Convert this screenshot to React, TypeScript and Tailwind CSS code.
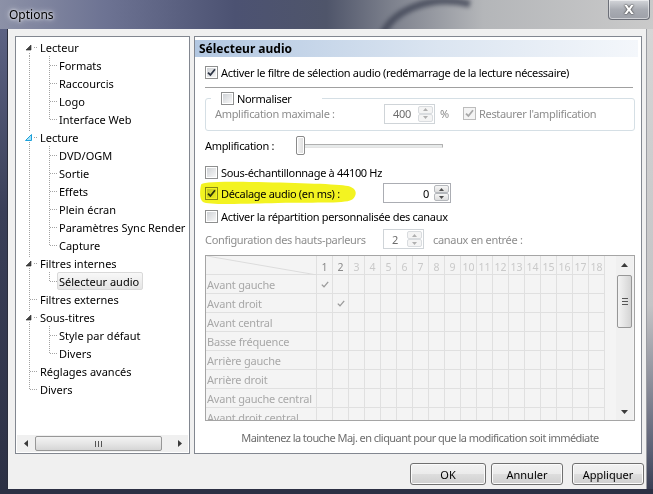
import React from 'react';

type TreeItem = { l: 0 | 1; t: string; arrow?: 'dark' | 'hover'; last?: boolean; first?: boolean; sel?: boolean };

const TREE: TreeItem[] = [
  { l: 0, t: 'Lecteur', arrow: 'dark', first: true },
  { l: 1, t: 'Formats' },
  { l: 1, t: 'Raccourcis' },
  { l: 1, t: 'Logo' },
  { l: 1, t: 'Interface Web', last: true },
  { l: 0, t: 'Lecture', arrow: 'hover' },
  { l: 1, t: 'DVD/OGM' },
  { l: 1, t: 'Sortie' },
  { l: 1, t: 'Effets' },
  { l: 1, t: 'Plein écran' },
  { l: 1, t: 'Paramètres Sync Render' },
  { l: 1, t: 'Capture', last: true },
  { l: 0, t: 'Filtres internes', arrow: 'dark' },
  { l: 1, t: 'Sélecteur audio', last: true, sel: true },
  { l: 0, t: 'Filtres externes' },
  { l: 0, t: 'Sous-titres', arrow: 'dark' },
  { l: 1, t: 'Style par défaut' },
  { l: 1, t: 'Divers', last: true },
  { l: 0, t: 'Réglages avancés' },
  { l: 0, t: 'Divers', last: true },
];

const CHANNELS = [
  'Avant gauche',
  'Avant droit',
  'Avant central',
  'Basse fréquence',
  'Arrière gauche',
  'Arrière droit',
  'Avant gauche central',
  'Avant droit central',
];

const Guide: React.FC<{ item: TreeItem }> = ({ item }) => {
  const w = item.l === 0 ? 21 : 40;
  const dots = { stroke: '#a3a3a3', strokeWidth: 1, strokeDasharray: '1 1', shapeRendering: 'crispEdges' as const };
  return (
    <svg width={w} height={18} className="shrink-0">
      {item.l === 0 ? (
        <>
          <line x1={12.5} y1={item.first ? 9 : 0} x2={12.5} y2={item.last ? 10 : 18} {...dots} />
          <line x1={item.arrow ? 17 : 13} y1={9.5} x2={21} y2={9.5} {...dots} />
          {item.arrow && <rect x={7} y={4} width={10} height={10} fill="#fff" />}
          {item.arrow === 'dark' && <polygon points="9,12 14,7 14,12" fill="#454545" stroke="#262626" strokeWidth={0.6} />}
          {item.arrow === 'hover' && <polygon points="8.5,12.5 14.5,6.5 14.5,12.5" fill="#a6e3f8" stroke="#1ca0da" strokeWidth={1} />}
        </>
      ) : (
        <>
          <line x1={12.5} y1={0} x2={12.5} y2={18} {...dots} />
          <line x1={32.5} y1={0} x2={32.5} y2={item.last ? 10 : 18} {...dots} />
          <line x1={33} y1={9.5} x2={40} y2={9.5} {...dots} />
        </>
      )}
    </svg>
  );
};

const Check: React.FC<{ checked?: boolean; disabled?: boolean }> = ({ checked, disabled }) => (
  <span
    className={`w-[13px] h-[13px] shrink-0 flex items-center justify-center border ${
      disabled ? 'border-[#bcbcbc] bg-[#f4f4f4]' : 'border-[#8e8f8f] bg-white'
    }`}
  >
    <span
      className={`w-[9px] h-[9px] flex items-center justify-center ${
        disabled ? 'bg-[#f4f4f4]' : 'bg-[linear-gradient(135deg,#cfd2d6,#f7f7f7)]'
      }`}
    >
      {checked && (
        <svg width="9" height="9" viewBox="0 0 9 9">
          <path d="M1 4.6 L3.4 7 L8 1.3" fill="none" stroke={disabled ? '#a8a8a8' : '#2e3646'} strokeWidth="1.8" />
        </svg>
      )}
    </span>
  </span>
);

const Spin: React.FC<{ value: string; w: string; pr: string; disabled?: boolean }> = ({ value, w, pr, disabled }) => (
  <div className={`${w} h-[20px] flex border ${disabled ? 'border-[#cfd4d8] bg-white' : 'border-[#abadb3] bg-white'}`}>
    <div className={`flex-1 flex items-center justify-end ${pr} ${disabled ? 'text-[#6d6d6d]' : 'text-black'}`}>{value}</div>
    <div className="w-[15px] flex flex-col my-[1px] mr-[1px]">
      {[0, 1].map((i) => (
        <div
          key={i}
          className={`flex-1 flex items-center justify-center border rounded-[2px] ${
            disabled ? 'border-[#d9dcdf] bg-[#f4f4f4]' : 'border-[#b5b8bc] bg-[linear-gradient(#f6f6f6,#dedede)]'
          }`}
        >
          <svg width="5" height="3" viewBox="0 0 5 3">
            <polygon points={i === 0 ? '0,3 2.5,0 5,3' : '0,0 2.5,3 5,0'} fill={disabled ? '#b0b0b0' : '#4d4d4d'} />
          </svg>
        </div>
      ))}
    </div>
  </div>
);

const Button: React.FC<{ label: string; className?: string }> = ({ label, className }) => (
  <button
    className={`h-[22px] border border-[#707070] rounded-[3px] shadow-[inset_0_0_0_1px_#fbfbfb] bg-[linear-gradient(#f2f2f2_0%,#ebebeb_48%,#dddddd_52%,#cfcfcf_100%)] text-black ${className ?? ''}`}
  >
    {label}
  </button>
);

const Arrow: React.FC<{ dir: 'up' | 'down' | 'left' | 'right' }> = ({ dir }) => {
  const pts = { up: '0,4 3.5,0 7,4', down: '0,0 3.5,4 7,0', left: '4,0 0,3.5 4,7', right: '0,0 4,3.5 0,7' }[dir];
  const vertical = dir === 'up' || dir === 'down';
  return (
    <svg width={vertical ? 7 : 4} height={vertical ? 4 : 7}>
      <polygon points={pts} fill="#3b3b3b" />
    </svg>
  );
};

export default function App() {
  return (
    <div className="w-[653px] h-[494px] flex flex-col overflow-hidden font-['Noto_Sans',sans-serif] text-[11px] leading-none text-black bg-[#3a3f55]">
      {/* title bar */}
      <div className="relative h-[29px] shrink-0 flex justify-between bg-[linear-gradient(90deg,#8c91a7_0%,#6d7393_16%,#4c5272_36%,#4f556a_50%,#7d818d_60%,#b4b6b9_74%,#cacaca_100%)] overflow-hidden">
        <svg className="absolute left-[360px] top-0" width="140" height="29">
          <path d="M20 40 C30 10 70 -6 110 4" fill="none" stroke="#3c4152" strokeWidth="7" opacity="0.75" style={{ filter: 'blur(2px)' }} />
        </svg>
        <span className="relative pl-[9px] pt-[9px] text-[12px] text-black [text-shadow:0_0_6px_#ffffff,0_0_3px_#ffffff]">Options</span>
        <div className="relative mr-[3px] w-[42px] h-[20px] rounded-b-[4px] border border-t-0 border-[#6c6f78] bg-[linear-gradient(#d4d6da,#a9acb3_50%,#9da0a8)] shadow-[inset_0_0_0_1px_rgba(255,255,255,0.5)] flex items-center justify-center">
          <span className="text-white font-bold text-[13px] font-['DejaVu_Sans',sans-serif] [text-shadow:0_0_2px_#333,0_0_1px_#333]">X</span>
        </div>
      </div>

      <div className="flex-1 flex min-h-0">
        <div className="w-[8px] shrink-0 bg-[linear-gradient(#5c6283,#3a3f58_40%,#2d3145)] border-r border-[#2a2d3c]" />

        {/* client area */}
        <div className="flex-1 bg-[#f0f0f0] flex flex-col pt-[7px] pl-[7px] pr-[2px]">
          <div className="h-[418px] flex gap-[4px] pr-[2px]">
            {/* tree */}
            <div className="w-[175px] shrink-0 border border-[#828790] bg-white flex flex-col">
              <div className="flex-1 pt-[1px] pl-[1px] overflow-hidden">
                {TREE.map((it, i) => (
                  <div key={i} className="h-[18px] flex items-center whitespace-nowrap">
                    <Guide item={it} />
                    <span
                      className={`h-[18px] flex items-center pl-[1px] pr-[3px] border rounded-[2px] ${
                        it.sel ? 'border-[#d9d9d9] bg-[linear-gradient(#f8f8f8,#e5e5e5)]' : 'border-transparent'
                      }`}
                    >
                      {it.t}
                    </span>
                  </div>
                ))}
              </div>
              <div className="h-[17px] mx-[1px] mb-[1px] flex items-center bg-[#f0f0f0]">
                <div className="w-[17px] flex justify-center">
                  <Arrow dir="left" />
                </div>
                <div className="w-[127px] h-[15px] ml-[1px] rounded-[2px] border border-[#979797] bg-[linear-gradient(#f3f3f3,#e6e6e6_50%,#d6d6d6)] flex items-center justify-center gap-[2px]">
                  <span className="w-px h-[6px] bg-[#555]" />
                  <span className="w-px h-[6px] bg-[#555]" />
                  <span className="w-px h-[6px] bg-[#555]" />
                </div>
                <div className="flex-1" />
                <div className="w-[17px] flex justify-center">
                  <Arrow dir="right" />
                </div>
              </div>
            </div>

            {/* settings page */}
            <div className="flex-1 border border-[#828790] bg-white flex flex-col tracking-[-0.32px]">
              <div className="mt-[3px] mr-[3px] h-[17px] pl-[4px] flex items-center font-bold text-[12px] tracking-normal bg-[linear-gradient(90deg,#b2c7e1,#dbe5f1_55%,#f4f7fb)]">
                Sélecteur audio
              </div>
              <div className="pl-[10px] pr-[6px] flex flex-col">
                <div className="mt-[6px] h-[18px] flex items-center gap-[3px]">
                  <Check checked />
                  <span>Activer le filtre de sélection audio (redémarrage de la lecture nécessaire)</span>
                </div>
                <div className="mt-[6px] mr-[2px] h-px bg-[#a0a0a0]" />

                <div className="relative mt-[10px] h-[33px] border border-[#d5dfe5] rounded-[3px] pl-[9px] pt-[5px]">
                  <div className="absolute left-[5px] top-[-8px] w-[111px] h-[14px] bg-white pl-[10px] flex items-center gap-[3px]">
                    <Check />
                    <span>Normaliser</span>
                  </div>
                  <div className="h-[19px] flex items-center text-[#8d8d8d]">
                    <span className="w-[169px]">Amplification maximale :</span>
                    <Spin value="400" w="w-[51px]" pr="pr-[7px]" disabled />
                    <span className="w-[28px] pl-[5px]">%</span>
                    <Check checked disabled />
                    <span className="ml-[3px]">Restaurer l'amplification</span>
                  </div>
                </div>

                <div className="mt-[5px] h-[19px] flex items-center">
                  <span className="w-[91px]">Amplification :</span>
                  <div className="relative w-[147px] h-[19px] flex items-center">
                    <div className="w-full h-[4px] border border-[#b0b0b0] border-b-[#e3e3e3] bg-[#e7eaea] rounded-[1px]" />
                    <div className="absolute left-0 top-0 w-[9px] h-[19px] rounded-[2px] border border-[#8a8a8a] bg-[linear-gradient(90deg,#f4f4f4,#dcdcdc)] shadow-[inset_0_0_0_1px_#fff]" />
                  </div>
                </div>

                <div className="mt-[8px] h-[18px] flex items-center gap-[3px]">
                  <Check />
                  <span>Sous-échantillonnage à 44100 Hz</span>
                </div>

                <div className="relative mt-[2px] h-[20px] flex items-center">
                  <div className="w-[178px] flex items-center gap-[3px]">
                    <Check checked />
                    <span>Décalage audio (en ms) :</span>
                  </div>
                  <Spin value="0" w="w-[68px]" pr="pr-[5px]" />
                  <svg className="absolute left-[-7px] top-[-3px] mix-blend-multiply pointer-events-none" width="162" height="26">
                    <path d="M3 5 C2 2 20 1 60 2 C100 3 140 4 150 6 C158 8 160 13 155 19 C150 24 120 22 80 23 C40 24 10 25 5 22 C1 19 2 10 3 5 Z" fill="#f3f321" />
                  </svg>
                </div>

                <div className="mt-[4px] h-[18px] flex items-center gap-[3px]">
                  <Check />
                  <span>Activer la répartition personnalisée des canaux</span>
                </div>

                <div className="mt-[4px] h-[20px] flex items-center text-[#8d8d8d]">
                  <span className="w-[178px]">Configuration des hauts-parleurs</span>
                  <Spin value="2" w="w-[41px]" pr="pr-[9px]" disabled />
                  <span className="ml-[9px]">canaux en entrée :</span>
                </div>

                {/* channel matrix */}
                <div className="mt-[6px] h-[166px] border border-[#a5a5a5] bg-[#f4f4f4] flex overflow-hidden tracking-normal">
                  <div className="w-[399px] shrink-0">
                    <div className="h-[19px] grid grid-cols-[111px_repeat(18,16px)] border-b border-[#e0e0e0]">
                      <div className="border-r border-[#e0e0e0]">
                        <svg width="111" height="19">
                          <line x1="1" y1="0" x2="111" y2="19" stroke="#dcdcdc" strokeWidth="1" />
                        </svg>
                      </div>
                      {Array.from({ length: 18 }, (_, c) => (
                        <div
                          key={c}
                          className={`border-r border-[#e0e0e0] flex items-end justify-center pb-[3px] text-[10.5px] ${
                            c < 2 ? 'text-[#8a8a8a]' : 'text-[#c9c9c9]'
                          }`}
                        >
                          {c + 1}
                        </div>
                      ))}
                    </div>
                    {CHANNELS.map((ch, r) => (
                      <div key={ch} className="h-[19px] grid grid-cols-[111px_repeat(18,16px)] border-b border-[#e0e0e0]">
                        <div className="border-r border-[#e0e0e0] flex items-center pl-[1px] text-[#a8a8a8] tracking-[-0.2px] whitespace-nowrap">{ch}</div>
                        {Array.from({ length: 18 }, (_, c) => (
                          <div key={c} className="border-r border-[#e0e0e0] flex items-center justify-center">
                            {r === c && r < 2 && (
                              <svg width="8" height="7" viewBox="0 0 8 7">
                                <path d="M0.8 3.6 L3 5.8 L7.2 0.8" fill="none" stroke="#9a9a9a" strokeWidth="1.3" />
                              </svg>
                            )}
                          </div>
                        ))}
                      </div>
                    ))}
                  </div>
                  <div className="flex-1" />
                  <div className="w-[17px] mr-[1px] flex flex-col items-center bg-[#f0f0f0]">
                    <div className="h-[17px] flex items-center">
                      <Arrow dir="up" />
                    </div>
                    <div className="mt-[2px] w-[15px] h-[53px] rounded-[2px] border border-[#979797] bg-[linear-gradient(90deg,#f3f3f3,#e4e4e4_50%,#d4d4d4)] flex flex-col items-center justify-center gap-[2px]">
                      <span className="w-[6px] h-px bg-[#555]" />
                      <span className="w-[6px] h-px bg-[#555]" />
                      <span className="w-[6px] h-px bg-[#555]" />
                    </div>
                    <div className="flex-1" />
                    <div className="h-[17px] flex items-center">
                      <Arrow dir="down" />
                    </div>
                  </div>
                </div>

                <div className="mt-[7px] h-[18px] flex items-center justify-center text-[#6d6d6d] tracking-[-0.55px]">
                  Maintenez la touche Maj. en cliquant pour que la modification soit immédiate
                </div>
              </div>
            </div>
          </div>

          <div className="mt-[9px] flex justify-end">
            <Button label="OK" className="w-[76px]" />
            <Button label="Annuler" className="ml-[5px] w-[72px]" />
            <Button label="Appliquer" className="ml-[9px] w-[72px]" />
          </div>
        </div>

        <div className="w-[7px] shrink-0 bg-[linear-gradient(#d6d6d6,#c4c4c6_60%,#5a5f74_92%,#3a3f55)] border-l border-[#9a9ca2]" />
      </div>
      <div className="h-[5px] shrink-0 bg-[#2c3044]" />
    </div>
  );
}
